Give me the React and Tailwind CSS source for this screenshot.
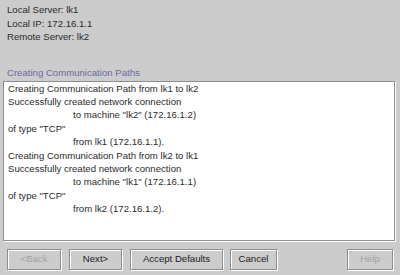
const LOG = [
  { text: 'Creating Communication Path from lk1 to lk2' },
  { text: 'Successfully created network connection' },
  { text: 'to machine "lk2" (172.16.1.2)', indent: true },
  { text: 'of type "TCP"' },
  { text: 'from lk1 (172.16.1.1).', indent: true },
  { text: 'Creating Communication Path from lk2 to lk1' },
  { text: 'Successfully created network connection' },
  { text: 'to machine "lk1" (172.16.1.1)', indent: true },
  { text: 'of type "TCP"' },
  { text: 'from lk2 (172.16.1.2).', indent: true },
]

function WizardButton({ label, disabled, className = '' }) {
  return (
    <button
      type="button"
      disabled={disabled}
      className={`h-[21px] border border-[#8e8e8e] bg-[#cccccc] shadow-[inset_1px_1px_0_#ffffff,1px_1px_0_#ffffff] text-[9.6px] ${
        disabled ? 'text-[#a3a3a3]' : 'text-[#222]'
      } ${className}`}
    >
      {label}
    </button>
  )
}

export default function App() {
  return (
    <div className="flex h-[275px] w-[400px] flex-col bg-[#cccccc] font-['Liberation_Sans',Arial,sans-serif] text-[9.6px] text-[#2b2b2b]">
      <div className="px-[7px] pt-[3px] leading-[13.5px]">
        <div>Local Server: lk1</div>
        <div>Local IP: 172.16.1.1</div>
        <div>Remote Server: lk2</div>
      </div>

      <div className="mt-[22px] px-[7px] leading-[13px] text-[#6b6b9c]">Creating Communication Paths</div>

      <div className="mx-[3px] mt-[2px] h-[160px] w-[392px] border border-[#8e8e8e] bg-white px-[4px] leading-[13.4px] shadow-[1px_1px_0_#ffffff]">
        {LOG.map((line, i) => (
          <div key={i} className={line.indent ? 'pl-[65px]' : ''}>
            {line.text}
          </div>
        ))}
      </div>

      <div className="mt-[8px] flex px-[7px]">
        <WizardButton label="<Back" disabled className="w-[54px]" />
        <WizardButton label="Next>" className="ml-[8px] w-[53px]" />
        <WizardButton label="Accept Defaults" className="ml-[8px] w-[93px]" />
        <WizardButton label="Cancel" className="ml-[7px] w-[47px]" />
        <WizardButton label="Help" disabled className="ml-auto w-[46px]" />
      </div>
    </div>
  )
}
